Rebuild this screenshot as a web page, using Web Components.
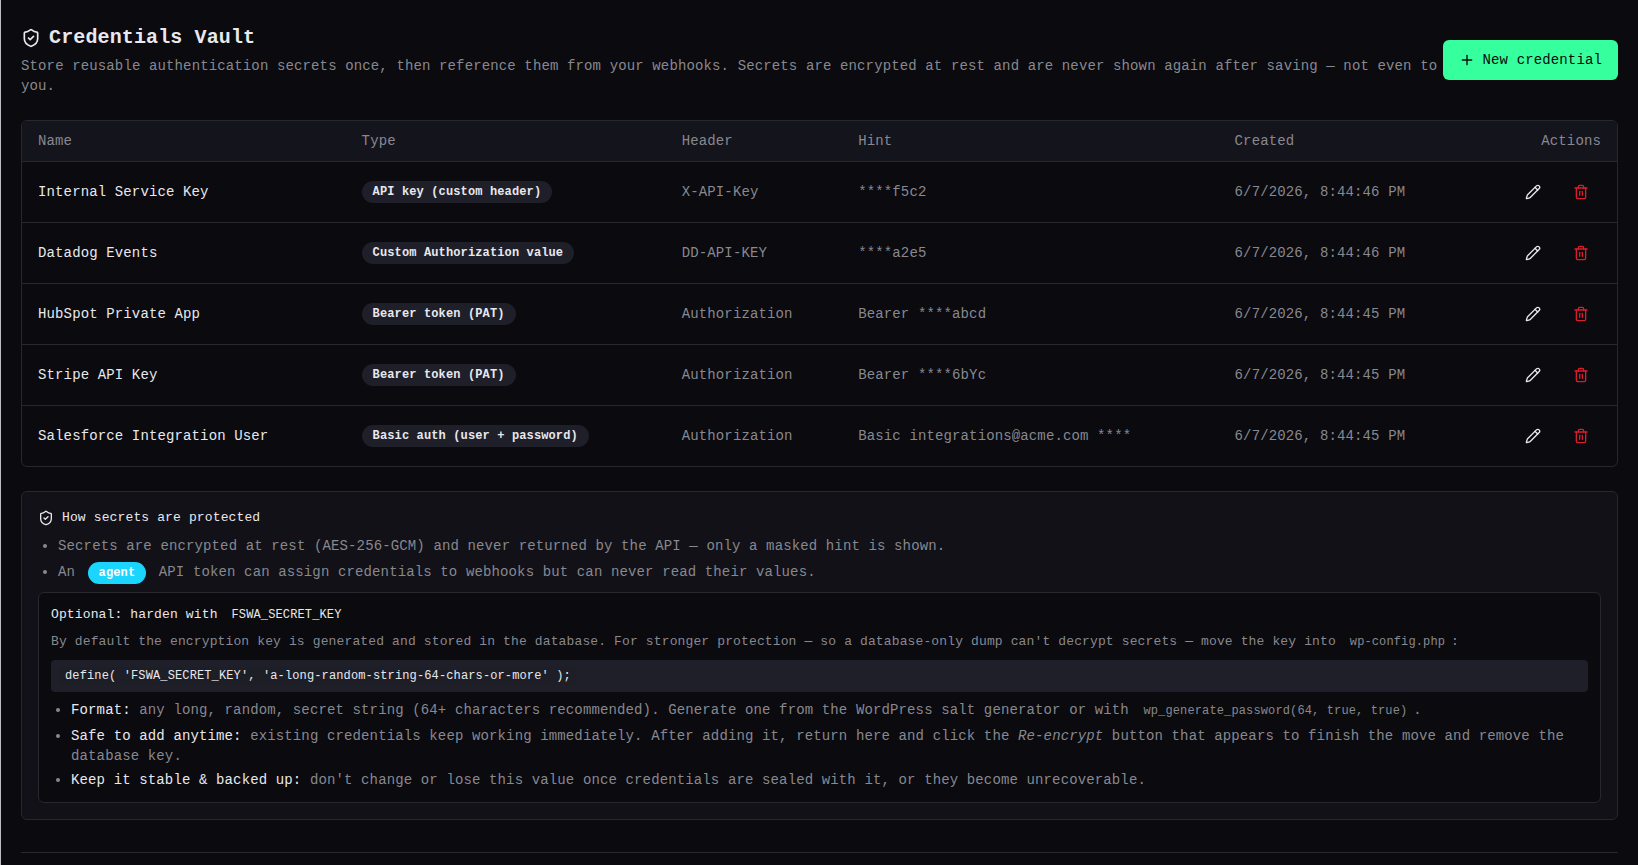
<!DOCTYPE html>
<html lang="en">
<head>
<meta charset="utf-8">
<title>Credentials Vault</title>
<style>
  html { background: #0a0a0f; }
  body {
    --bg: #0a0a0f;
    --line: #27272f;
    --text: #e8e8ed;
    --muted: #888890;
    --chip: #1f1f2a;
    --head: #14141c;
    --card: #111117;
    --accent: #36ff9e;
    --info: #1ad6ff;
    --danger: #dc1c2b;
    margin: 0;
    min-height: 865px;
    box-sizing: border-box;
    border-left: 1px solid #bdbdc2;
    background: var(--bg);
    color: var(--text);
    font: 14px/20px "Liberation Mono", monospace;
    letter-spacing: 0.13px;
    overflow: hidden;
  }
</style>
</head>
<body>
<vault-page>
  <vault-header slot="header" heading="Credentials Vault">
    Store reusable authentication secrets once, then reference them from your webhooks. Secrets are encrypted at rest and are never shown again after saving — not even to you.
    <vault-button slot="action" icon="plus">New credential</vault-button>
  </vault-header>
  <vault-table></vault-table>
  <protection-card heading="How secrets are protected">
    <bullet-list>
      <bullet-item>Secrets are encrypted at rest (AES-256-GCM) and never returned by the API — only a masked hint is shown.</bullet-item>
      <bullet-item class="agent">An <type-badge tone="info">agent</type-badge> API token can assign credentials to webhooks but can never read their values.</bullet-item>
    </bullet-list>
    <harden-panel></harden-panel>
  </protection-card>
</vault-page>

<script>
const ICONS = {
  shield: '<path d="M20 13c0 5-3.5 7.5-7.66 8.95a1 1 0 0 1-.67-.01C7.5 20.5 4 18 4 13V6a1 1 0 0 1 1-1c2 0 4.5-1.2 6.24-2.72a1.17 1.17 0 0 1 1.52 0C14.51 3.81 17 5 19 5a1 1 0 0 1 1 1z"/><path d="m9 12 2 2 4-4"/>',
  plus: '<path d="M5 12h14"/><path d="M12 5v14"/>',
  pencil: '<path d="M21.174 6.812a1 1 0 0 0-3.986-3.987L3.842 16.174a2 2 0 0 0-.5.83l-1.321 4.352a.5.5 0 0 0 .623.622l4.353-1.32a2 2 0 0 0 .83-.497z"/><path d="m15 5 4 4"/>',
  trash: '<path d="M3 6h18"/><path d="M19 6v14c0 1-1 2-2 2H7c-1 0-2-1-2-2V6"/><path d="M8 6V4c0-1 1-2 2-2h4c1 0 2 1 2 2v2"/><path d="M10 11v6"/><path d="M14 11v6"/>'
};

const component = (name, render) => customElements.define(name, class extends HTMLElement {
  constructor() {
    super();
    this.attachShadow({ mode: 'open' });
  }
  connectedCallback() {
    this.shadowRoot.innerHTML = render(this);
  }
});

component('line-icon', el => `
  <style>
    :host { display: block; flex: none; width: ${el.getAttribute('size')}px; height: ${el.getAttribute('size')}px; }
    svg { display: block; width: 100%; height: 100%; fill: none; stroke: currentColor; stroke-width: 2; stroke-linecap: round; stroke-linejoin: round; }
  </style>
  <svg viewBox="0 0 24 24">${ICONS[el.getAttribute('name')]}</svg>`);

component('type-badge', el => `
  <style>
    :host {
      display: inline-block; box-sizing: border-box; height: 22px; padding: 2px 10px;
      border: 1px solid transparent; border-radius: 11px; background: var(--chip);
      color: var(--text); font-size: 12px; font-weight: 700; line-height: 16px; white-space: nowrap;
    }
    :host([tone="info"]) { background: var(--info); color: #fff; margin: 0 4px; }
  </style><slot></slot>`);

component('code-chip', () => `
  <style>
    :host { font-size: 12px; line-height: 1; padding: 2px 6px; border-radius: 4px; background: #0b0b0e; }
    :host([block]) { background: #1e1e27; }
  </style><slot></slot>`);

component('vault-button', el => `
  <style>
    :host { display: block; flex: none; }
    button {
      display: flex; align-items: center; gap: 8px; height: 40px; padding: 0 16px; border: 0; border-radius: 6px;
      background: var(--accent); color: #0a0a0f; font: inherit; letter-spacing: inherit; white-space: nowrap;
    }
  </style>
  <button><line-icon name="${el.getAttribute('icon')}" size="16"></line-icon><slot></slot></button>`);

component('row-action', el => `
  <style>
    :host { display: block; color: var(--text); }
    :host([tone="danger"]) { color: var(--danger); }
    button { display: grid; place-items: center; width: 40px; height: 36px; padding: 0; border: 0; background: none; color: inherit; }
  </style>
  <button aria-label="${el.getAttribute('label')}"><line-icon name="${el.getAttribute('icon')}" size="16"></line-icon></button>`);

component('vault-header', el => `
  <style>
    :host { display: flex; align-items: center; justify-content: space-between; }
    h1 { display: flex; align-items: center; gap: 8px; margin: 0 0 4px; font-size: 20px; line-height: 28px; font-weight: 700; }
    p { margin: 0; color: var(--muted); }
  </style>
  <div>
    <h1><line-icon name="shield" size="20"></line-icon>${el.getAttribute('heading')}</h1>
    <p><slot></slot></p>
  </div>
  <slot name="action"></slot>`);

const CREDENTIALS = [
  ['Internal Service Key', 'API key (custom header)', 'X-API-Key', '****f5c2', '6/7/2026, 8:44:46 PM'],
  ['Datadog Events', 'Custom Authorization value', 'DD-API-KEY', '****a2e5', '6/7/2026, 8:44:46 PM'],
  ['HubSpot Private App', 'Bearer token (PAT)', 'Authorization', 'Bearer ****abcd', '6/7/2026, 8:44:45 PM'],
  ['Stripe API Key', 'Bearer token (PAT)', 'Authorization', 'Bearer ****6bYc', '6/7/2026, 8:44:45 PM'],
  ['Salesforce Integration User', 'Basic auth (user + password)', 'Authorization', 'Basic integrations@acme.com ****', '6/7/2026, 8:44:45 PM']
];

component('vault-table', () => `
  <style>
    :host { display: block; border: 1px solid var(--line); border-radius: 6px; }
    .row {
      display: grid; grid-template-columns: 323.6px 320.1px 176.5px 376.4px 230px 1fr; align-items: center;
      height: 60px; border-top: 1px solid var(--line); color: var(--muted);
    }
    .head { height: 40px; border-top: 0; border-radius: 5px 5px 0 0; background: var(--head); }
    .row > * { padding: 0 16px; white-space: nowrap; }
    .row > :last-child { display: flex; justify-content: flex-end; gap: 8px; }
    .row > .name { color: var(--text); }
    .type { display: flex; }
  </style>
  <div class="row head"><div>Name</div><div>Type</div><div>Header</div><div>Hint</div><div>Created</div><div>Actions</div></div>
  ${CREDENTIALS.map(([name, type, header, hint, created]) => `
  <div class="row">
    <div class="name">${name}</div>
    <div class="type"><type-badge>${type}</type-badge></div>
    <div>${header}</div>
    <div>${hint}</div>
    <div>${created}</div>
    <div>
      <row-action icon="pencil" label="Edit"></row-action>
      <row-action icon="trash" label="Delete" tone="danger"></row-action>
    </div>
  </div>`).join('')}`);

component('bullet-list', () => `
  <style>
    :host { display: flex; flex-direction: column; gap: 4px; margin-top: 8px; padding-left: 20px; color: var(--muted); }
  </style><slot></slot>`);

component('bullet-item', () => `
  <style>
    :host { display: list-item; list-style: disc outside; min-height: 20px; }
    :host::marker { font-size: 16px; line-height: 1; }
    :host(.agent) { height: 22px; padding-top: 2px; }
    :host(.coded) { height: 22px; }
  </style><slot></slot>`);

component('protection-card', el => `
  <style>
    :host { display: block; padding: 16px; border: 1px solid var(--line); border-radius: 6px; background: var(--card); }
    h2 { display: flex; align-items: center; gap: 8px; margin: 0; font-size: 13px; line-height: 20px; font-weight: 400; }
  </style>
  <h2><line-icon name="shield" size="16"></line-icon>${el.getAttribute('heading')}</h2>
  <slot></slot>`);

component('harden-panel', () => `
  <style>
    :host { display: block; margin-top: 8px; padding: 12px; border: 1px solid var(--line); border-radius: 6px; background: var(--bg); }
    h3 { margin: 0; font-size: 13px; line-height: 20px; font-weight: 400; }
    p { margin: 7px 0 8px; font-size: 13px; line-height: 20px; color: var(--muted); }
    .snippet { height: 16px; padding: 8px; border-radius: 4px; background: var(--chip); font-size: 12px; line-height: 16px; white-space: nowrap; }
    strong { font-weight: 400; color: var(--text); }
  </style>
  <h3>Optional: harden with <code-chip>FSWA_SECRET_KEY</code-chip></h3>
  <p>By default the encryption key is generated and stored in the database. For stronger protection — so a database-only dump can't decrypt secrets — move the key into <code-chip>wp-config.php</code-chip>:</p>
  <div class="snippet"><code-chip block>define( 'FSWA_SECRET_KEY', 'a-long-random-string-64-chars-or-more' );</code-chip></div>
  <bullet-list>
    <bullet-item class="coded"><strong>Format:</strong> any long, random, secret string (64+ characters recommended). Generate one from the WordPress salt generator or with <code-chip>wp_generate_password(64, true, true)</code-chip>.</bullet-item>
    <bullet-item><strong>Safe to add anytime:</strong> existing credentials keep working immediately. After adding it, return here and click the <em>Re-encrypt</em> button that appears to finish the move and remove the database key.</bullet-item>
    <bullet-item><strong>Keep it stable &amp; backed up:</strong> don't change or lose this value once credentials are sealed with it, or they become unrecoverable.</bullet-item>
  </bullet-list>`);

component('vault-page', () => `
  <style>
    :host { display: flex; flex-direction: column; gap: 24px; padding: 24px 20px 0; }
    hr { width: 100%; height: 1px; margin: 8px 0 0; border: 0; background: var(--line); }
  </style>
  <slot name="header"></slot>
  <slot></slot>
  <hr>`);
</script>
</body>
</html>
